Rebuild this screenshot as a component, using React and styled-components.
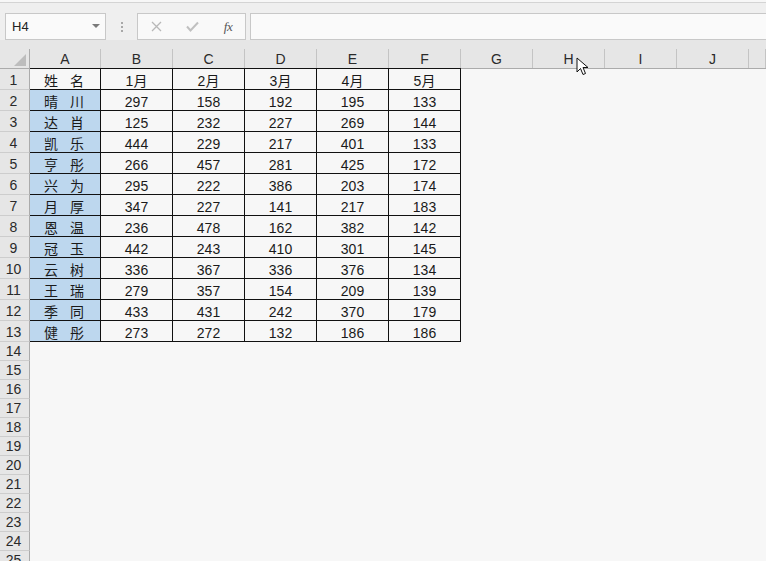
import React from "react";
import styled, { createGlobalStyle } from "styled-components";

const Global = createGlobalStyle`
  html, body { margin: 0; padding: 0; }
  body {
    background: #f7f7f7;
    overflow: hidden;
    font-family: "Liberation Sans", "Noto Sans CJK SC", sans-serif;
    color: #1a1a1a;
  }
`;

const Page = styled.div`
  position: relative;
  width: 766px;
  height: 561px;
  overflow: hidden;
  background: #f7f7f7;
`;

const FormulaArea = styled.div`
  margin-top: 2px;
  border-top: 1px solid #d4d4d4;
  height: 38px;
  box-sizing: border-box;
  padding-top: 10px;
  background: #efefef;
  display: flex;
  align-items: stretch;
`;

const NameBox = styled.div`
  margin-left: 5px;
  width: 101px;
  box-sizing: border-box;
  border: 1px solid #c8c8c8;
  background: #fafafa;
  display: flex;
  align-items: center;
  justify-content: space-between;
  padding: 0 5px 0 6px;
  font-size: 13px;
  color: #222;
`;

const Caret = styled.span`
  width: 0;
  height: 0;
  border-left: 4px solid transparent;
  border-right: 4px solid transparent;
  border-top: 4px solid #7a7a7a;
  margin-bottom: 1px;
`;

const Dots = styled.div`
  width: 31px;
  display: flex;
  flex-direction: column;
  align-items: center;
  justify-content: center;
  gap: 2px;
  & > i {
    display: block;
    width: 2px;
    height: 2px;
    background: #a8a8a8;
  }
`;

const FxBox = styled.div`
  width: 109px;
  box-sizing: border-box;
  border: 1px solid #c8c8c8;
  background: #f9f9f9;
  display: flex;
  align-items: center;
  padding-left: 12px;
  gap: 0;
`;

const FxIcon = styled.span`
  width: ${(p) => p.w}px;
  display: flex;
  align-items: center;
  justify-content: center;
  color: ${(p) => p.c};
`;

const FxText = styled.span`
  font-family: "Liberation Serif", serif;
  font-style: italic;
  font-size: 13px;
  color: #555;
  letter-spacing: -0.5px;
`;

const FormulaInput = styled.div`
  margin-left: 4px;
  flex: 1;
  border: 1px solid #c8c8c8;
  border-right: none;
  background: #fafafa;
`;

const Grid = styled.div`
  display: grid;
  grid-template-columns: 30px 71px repeat(9, 72px) 1fr;
`;

const HeaderCell = styled.div`
  background: #e6e6e6;
  padding-top: 9px;
  height: 29px;
  box-sizing: border-box;
  border-bottom: 1px solid ${(p) => (p.inTable ? "#111" : "#ababab")};
`;

const HeaderInner = styled.div`
  height: 19px;
  box-sizing: border-box;
  border-right: 1px solid ${(p) => (p.corner ? "#ababab" : "#c4c4c4")};
  display: flex;
  align-items: flex-end;
  justify-content: ${(p) => (p.corner ? "flex-end" : "center")};
  padding: ${(p) => (p.corner ? "0 3px 2px 0" : "0 0 1px 0")};
  font-size: 14px;
  line-height: 16px;
  color: #2a2a2a;
`;

const RowHead = styled.div`
  background: #e6e6e6;
  height: ${(p) => p.h}px;
  box-sizing: border-box;
  border-right: 1px solid #ababab;
  border-bottom: 1px solid #cdcdcd;
  display: flex;
  align-items: flex-end;
  justify-content: center;
  font-size: 14px;
  line-height: 16px;
  padding-bottom: ${(p) => (p.h > 19 ? 1 : 1)}px;
  padding-right: 2px;
  color: #2a2a2a;
`;

const Cell = styled.div`
  height: ${(p) => p.h}px;
  box-sizing: border-box;
  background: ${(p) => (p.fill ? "#bdd7ee" : "transparent")};
  border-right: ${(p) => (p.inTable ? "1px solid #111" : "none")};
  border-bottom: ${(p) => (p.inTable ? "1px solid #111" : "none")};
  display: flex;
  align-items: flex-end;
  justify-content: center;
  font-size: 14px;
  line-height: 16px;
  color: #1a1a1a;
`;

const NameChars = styled.span`
  display: flex;
  gap: 12px;
  padding-right: 2px;
`;

const Cursor = styled.svg`
  position: absolute;
  left: 576px;
  top: 57px;
`;

const names = [
  "姓名", "晴川", "达肖", "凯乐", "亨彤", "兴为", "月厚",
  "恩温", "冠玉", "云树", "王瑞", "季同", "健彤",
];

const values = [
  ["1月", "2月", "3月", "4月", "5月"],
  [297, 158, 192, 195, 133],
  [125, 232, 227, 269, 144],
  [444, 229, 217, 401, 133],
  [266, 457, 281, 425, 172],
  [295, 222, 386, 203, 174],
  [347, 227, 141, 217, 183],
  [236, 478, 162, 382, 142],
  [442, 243, 410, 301, 145],
  [336, 367, 336, 376, 134],
  [279, 357, 154, 209, 139],
  [433, 431, 242, 370, 179],
  [273, 272, 132, 186, 186],
];

const letters = ["A", "B", "C", "D", "E", "F", "G", "H", "I", "J", ""];

export default function App() {
  const rows = [];
  for (let r = 1; r <= 25; r++) {
    const h = r <= 13 ? 21 : 19;
    rows.push(
      <RowHead key={`h${r}`} h={h}>
        {r}
      </RowHead>
    );
    for (let c = 0; c < 11; c++) {
      const inTable = r <= 13 && c < 6;
      let content = null;
      if (inTable) {
        if (c === 0) {
          const n = names[r - 1];
          content = (
            <NameChars>
              <span>{n[0]}</span>
              <span>{n[1]}</span>
            </NameChars>
          );
        } else {
          content = values[r - 1][c - 1];
        }
      }
      rows.push(
        <Cell key={`c${r}-${c}`} h={h} inTable={inTable} fill={inTable && c === 0 && r > 1}>
          {content}
        </Cell>
      );
    }
  }

  return (
    <Page>
      <Global />
      <FormulaArea>
        <NameBox>
          <span>H4</span>
          <Caret />
        </NameBox>
        <Dots>
          <i />
          <i />
          <i />
        </Dots>
        <FxBox>
          <FxIcon w={12} c="#b5b5b5">
            <svg width="11" height="11" viewBox="0 0 11 11">
              <path d="M1 1 L10 10 M10 1 L1 10" stroke="#b8b8b8" strokeWidth="1.3" />
            </svg>
          </FxIcon>
          <FxIcon w={60} c="#b5b5b5">
            <svg width="13" height="11" viewBox="0 0 13 11">
              <path d="M1 5.5 L4.5 9.5 L12 1.5" stroke="#c0c0c0" strokeWidth="2" fill="none" />
            </svg>
          </FxIcon>
          <FxIcon w={12} c="#555">
            <FxText>fx</FxText>
          </FxIcon>
        </FxBox>
        <FormulaInput />
      </FormulaArea>
      <Grid>
        <HeaderCell>
          <HeaderInner corner>
            <svg width="12" height="12" viewBox="0 0 12 12">
              <path d="M12 0 L12 12 L0 12 Z" fill="#bdbdbd" />
            </svg>
          </HeaderInner>
        </HeaderCell>
        {letters.map((l, i) => (
          <HeaderCell key={`L${i}`} inTable={i < 6}>
            <HeaderInner>{l}</HeaderInner>
          </HeaderCell>
        ))}
        {rows}
      </Grid>
      <Cursor width="14" height="20" viewBox="0 0 14 20">
        <path
          d="M1 1 L1 15 L4.5 11.5 L7 17.5 L9.5 16.5 L7 10.5 L12 10.5 Z"
          fill="#fff"
          stroke="#111"
          strokeWidth="1"
          strokeLinejoin="round"
        />
      </Cursor>
    </Page>
  );
}
